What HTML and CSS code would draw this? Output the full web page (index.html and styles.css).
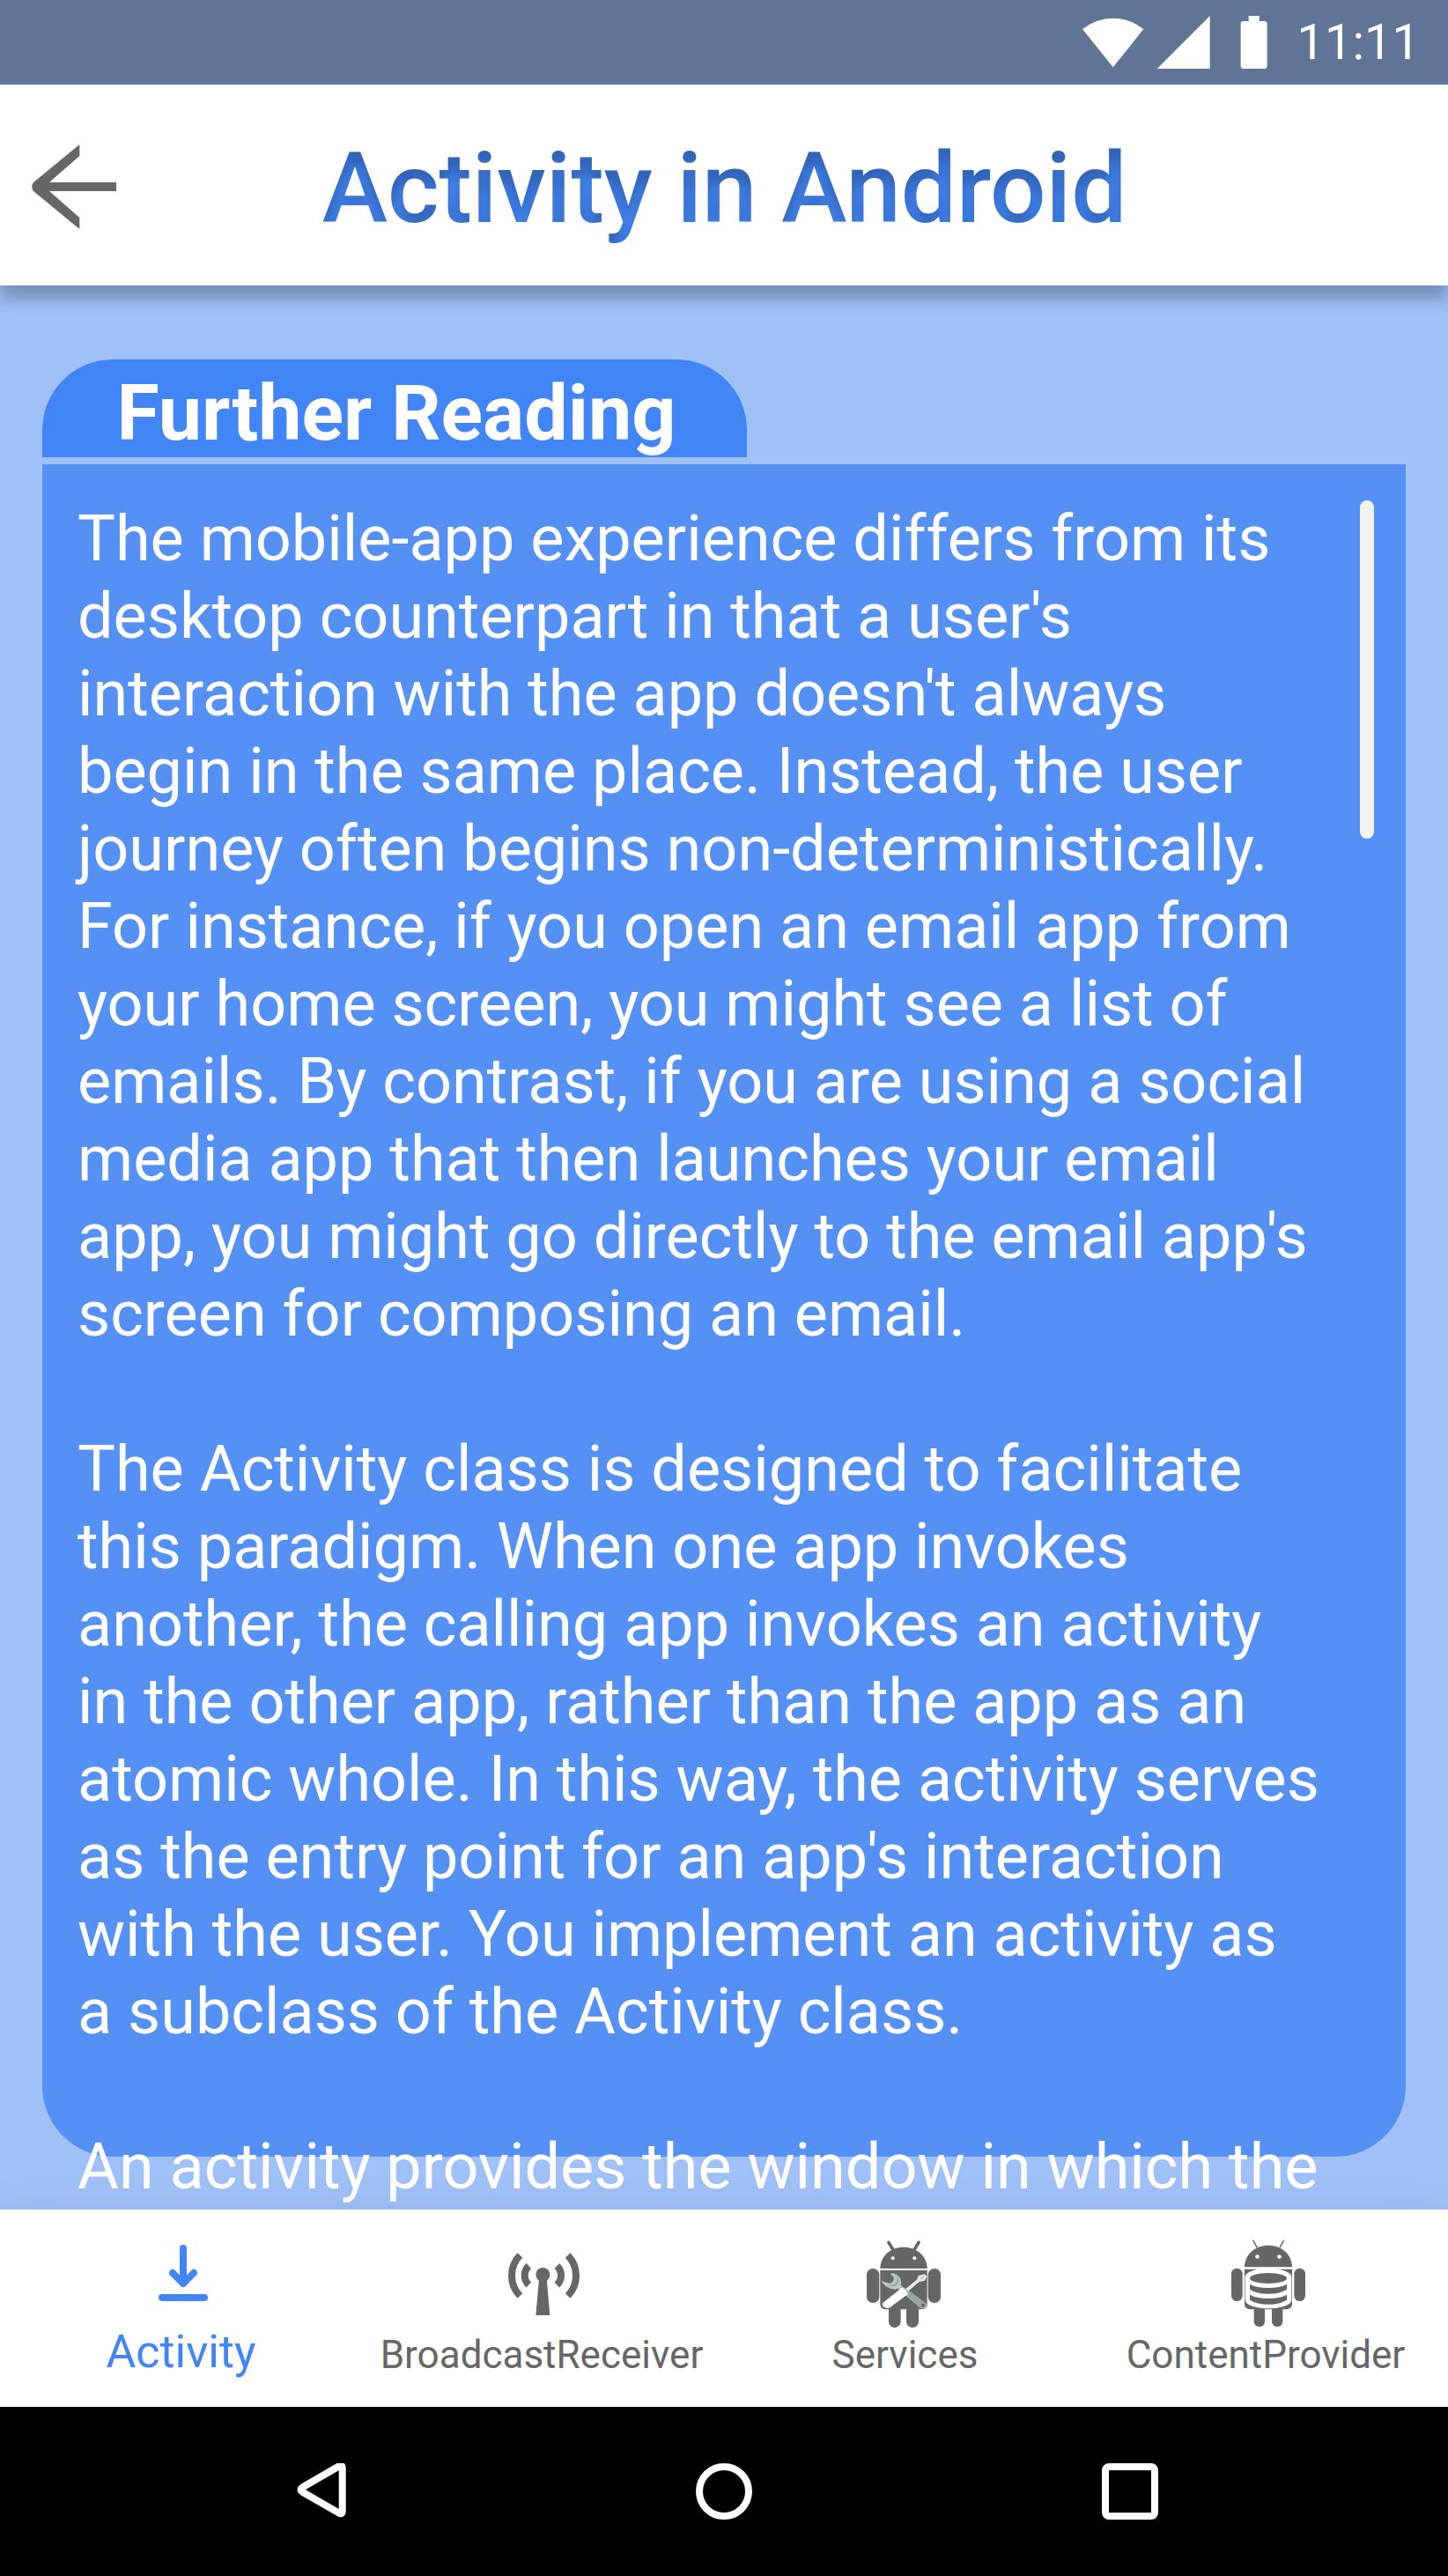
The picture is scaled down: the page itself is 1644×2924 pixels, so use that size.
FILE: index.html
```html
<!DOCTYPE html>
<html lang="en">
<head>
<meta charset="utf-8">
<title>Activity in Android</title>
<link rel="stylesheet" href="styles.css">
</head>
<body>
<svg class="defs" width="0" height="0" aria-hidden="true">
  <filter id="inner-shadow" x="-5%" y="-20%" width="110%" height="140%" color-interpolation-filters="sRGB">
    <feOffset in="SourceAlpha" dy="16" result="moved"/>
    <feGaussianBlur in="moved" stdDeviation="8" result="soft"/>
    <feComposite in="SourceAlpha" in2="soft" operator="out" result="edge"/>
    <feColorMatrix in="edge" type="matrix" values="0 0 0 0 0  0 0 0 0 0  0 0 0 0 0  0 0 0 .25 0" result="shade"/>
    <feMerge><feMergeNode in="SourceGraphic"/><feMergeNode in="shade"/></feMerge>
  </filter>
</svg>

<div class="screen">
  <div class="status-bar">
    <svg class="status-icons" viewBox="88 54 630 180" width="210" height="60" fill="#fff">
      <path d="M88 99Q136 62 192 62T296 99L192 229Z"/>
      <path d="M342 234L522 54V234Z"/>
      <path d="M654 54h36v18h17a10 10 0 0 1 10 10v142a10 10 0 0 1-10 10h-70a10 10 0 0 1-10-10V82a10 10 0 0 1 10-10h17Z"/>
    </svg>
    <span class="clock">11:11</span>
  </div>

  <header class="app-bar">
    <svg class="back" viewBox="36 164 96 96" width="96" height="96" fill="#666">
      <path d="M90.300 164L38 207Q34.500 212 38 217L90.300 260V247L56 217H132V207H56L90.300 177Z"/>
    </svg>
    <h1 class="title">Activity in Android</h1>
  </header>

  <main class="content">
    <h2 class="tab">Further Reading</h2>
    <section class="panel">
      <div class="text">
        <p>The mobile-app experience differs from its<br>desktop counterpart in that a user's<br>interaction with the app doesn't always<br>begin in the same place. Instead, the user<br>journey often begins non-deterministically.<br>For instance, if you open an email app from<br>your home screen, you might see a list of<br>emails. By contrast, if you are using a social<br>media app that then launches your email<br>app, you might go directly to the email app's<br>screen for composing an email.</p>
        <p>The Activity class is designed to facilitate<br>this paradigm. When one app invokes<br>another, the calling app invokes an activity<br>in the other app, rather than the app as an<br>atomic whole. In this way, the activity serves<br>as the entry point for an app's interaction<br>with the user. You implement an activity as<br>a subclass of the Activity class.</p>
        <p>An activity provides the window in which the</p>
      </div>
      <div class="scrollbar"></div>
    </section>
  </main>

  <nav class="tabs">
    <a class="item active">
      <svg class="icon download" viewBox="180 2548 56 64" width="56" height="64" fill="none" stroke="#4285f4" stroke-width="8" stroke-linecap="round" stroke-linejoin="round">
        <path d="M208 2552V2592M196 2580L208 2592L220 2580M184 2608H232"/>
      </svg>
      <span>Activity</span>
    </a>
    <a class="item">
      <svg class="icon antenna" viewBox="470 141 243 213" width="81" height="71" fill="none" stroke="#666" stroke-width="24">
        <path d="M636 186A44.700 44.700 0 0 1 636 251M673 150A99 99 0 0 1 673 288M540 186A44.700 44.700 0 0 0 540 251M510 150A99 99 0 0 0 510 288"/>
        <circle cx="588" cy="216" r="24" fill="#666" stroke="none"/>
        <path d="M575 230H601L612 354H564Z" fill="#666" stroke="none"/>
      </svg>
      <span class="long">BroadcastReceiver</span>
    </a>
    <a class="item">
      <svg class="icon android services" viewBox="192 69 252 297" width="84" height="99" fill="#666">
        <path d="M267 76L283 103M369 76L353 103" stroke="#666" stroke-width="11" stroke-linecap="round"/>
        <path d="M238 165C238 122 274 92 318 92S398 122 398 165Z"/>
        <circle cx="281" cy="130" r="6" fill="#fff"/><circle cx="355" cy="130" r="6" fill="#fff"/>
        <path d="M238 171H398V286A18 18 0 0 1 380 304H256A18 18 0 0 1 238 286Z"/>
        <rect x="192" y="165" width="43" height="117" rx="21"/><rect x="401" y="165" width="43" height="117" rx="21"/>
        <rect x="267" y="290" width="41" height="76" rx="20"/><rect x="327" y="290" width="42" height="76" rx="20"/>
        <path d="M272 182Q284 177 300 190Q313 203 308 222L396 285Q402 297 388 300Q379 302 371 296L299 233Q279 240 258 226Q247 218 241 206L260 213Q270 218 278 212Q288 202 283 194Z" fill="#bdc7c8"/>
        <path d="M285 184Q304 200 292 213Q282 224 262 222Q280 231 293 222Q302 214 302 204Q300 193 285 184Z" fill="#95a5a6"/>
        <path d="M309 237L323 230L396 285Q402 297 388 300Q379 302 371 296Z" fill="#95a5a6"/>
        <circle cx="384" cy="290" r="6" fill="#5d696a"/>
        <path d="M325 234L363 203L368 190L389 184L397 192L390 206L371 210L332 243Z" fill="#e9eef0"/>
        <path d="M371 195L388 189L391 193L377 204Z" fill="#c3cccf"/>
        <path d="M247 282L311 231L321 235L334 251L271 298Q261 303 249 295Q243 288 247 282Z" fill="#fff"/>
      </svg>
      <span>Services</span>
    </a>
    <a class="item">
      <svg class="icon android provider" viewBox="414 69 252 297" width="84" height="99" fill="#666">
        <path d="M488 69L502 94M593 69L579 94" stroke="#666" stroke-width="4.500"/>
        <path d="M459 160C459 116 496 86 540 86S621 116 621 160Z"/>
        <circle cx="502.500" cy="124.500" r="7" fill="#fff"/><circle cx="577.500" cy="124.500" r="7" fill="#fff"/>
        <path d="M459 167H621V286A18 18 0 0 1 603 304H477A18 18 0 0 1 459 286Z"/>
        <rect x="414" y="164" width="38" height="112" rx="19"/><rect x="628" y="164" width="38" height="112" rx="19"/>
        <rect x="491" y="285" width="37" height="78" rx="17"/><rect x="552" y="285" width="37" height="78" rx="17"/>
        <path d="M461 194C461 176 500 164 540 164S619 176 619 194V272C619 289 580 301 540 301S461 289 461 272Z" fill="#fff"/>
        <ellipse cx="540" cy="198" rx="63" ry="18"/>
        <path d="M477 218Q500 231 540 231T603 218V236Q580 251 540 251T477 236ZM477 254Q500 267 540 267T603 254V272Q580 287 540 287T477 272Z"/>
      </svg>
      <span class="long">ContentProvider</span>
    </a>
  </nav>

  <div class="system-nav">
    <svg viewBox="333 2796 64 64" width="64" height="64" fill="none" stroke="#fff" stroke-width="8" stroke-linejoin="round">
      <path d="M388.700 2801.500Q388.700 2797 385 2799.200L344 2823Q339 2826 344 2829L385 2852.600Q388.700 2854.800 388.700 2850Z"/>
    </svg>
    <svg class="home" viewBox="0 0 64 64" width="64" height="64" fill="none" stroke="#fff" stroke-width="8"><circle cx="32" cy="32" r="28"/></svg>
    <svg viewBox="0 0 64 64" width="64" height="64" fill="none" stroke="#fff" stroke-width="8"><rect x="4" y="4" width="56" height="56" rx="4"/></svg>
  </div>
</div>
</body>
</html>
```
FILE: styles.css
```css
* { box-sizing: border-box; }

body {
  margin: 0;
  font-family: Roboto, "Liberation Sans", sans-serif;
}

.defs { position: absolute; }

svg { display: block; flex: none; }

.screen {
  width: 1644px;
  height: 2924px;
  display: flex;
  flex-direction: column;
  overflow: hidden;
  background: #a0c1f8;
}

.status-bar {
  height: 96px;
  flex: none;
  display: flex;
  justify-content: flex-end;
  padding: 15px 32px 0 0;
  background: #607495;
  color: #fff;
}

.status-icons { margin: 3px 34px 0 0; }

.clock {
  font-size: 56px;
  line-height: 66px;
}

.app-bar {
  height: 228px;
  flex: none;
  display: grid;
  grid-template-columns: 132px 1fr 131px;
  background: #fff;
  box-shadow: 0 16px 16px rgba(0, 0, 0, .25);
  z-index: 1;
}

.back { margin: 68px 0 0 36px; }

.title {
  margin: 52px 0 0;
  text-align: center;
  font-size: 112px;
  font-weight: 500;
  line-height: 132px;
  white-space: nowrap;
  color: #4285f4;
  filter: url(#inner-shadow);
}

.content {
  height: 2184px;
  flex: none;
  padding: 84px 48px 0;
}

.tab {
  width: 800px;
  height: 111px;
  margin: 0 0 8px;
  padding: 9px 0 0 4px;
  border-radius: 80px 80px 0 0;
  background: #4285f6;
  color: #fff;
  font-size: 88px;
  font-weight: 700;
  line-height: 103px;
  text-align: center;
  white-space: nowrap;
}

.panel {
  height: 1921px;
  display: flex;
  justify-content: space-between;
  align-items: flex-start;
  padding: 41px 36px 0 40px;
  border-radius: 0 0 80px 80px;
  background: #5590f5;
}

.text {
  font-size: 72px;
  line-height: 88px;
  color: #fff;
  white-space: nowrap;
}

.text p { margin: 0 0 88px; }

.scrollbar {
  width: 16px;
  height: 384px;
  border-radius: 8px;
  background: #f3f3f3;
}

.tabs {
  height: 224px;
  flex: none;
  display: grid;
  grid-template-columns: repeat(4, 411px);
  background: #fff;
  box-shadow: 0 12px 56px rgba(0, 0, 0, .12), 0 32px 40px rgba(0, 0, 0, .14);
  z-index: 1;
}

.item {
  display: flex;
  flex-direction: column;
  justify-content: flex-end;
  align-items: center;
  padding-bottom: 32px;
  color: #666;
  font-size: 44px;
  line-height: 54px;
}

.item.active {
  padding-bottom: 35px;
  color: #4285f4;
  font-size: 52px;
}

.long { padding-right: 3px; }

.download { margin: 0 0 31px 5px; }
.antenna { margin: 0 0 18px 1px; }
.android { margin-bottom: 4px; }
.services { margin-right: 3px; }
.provider { margin-left: 3px; }

.system-nav {
  height: 192px;
  flex: none;
  display: flex;
  justify-content: space-between;
  padding: 64px 329px 0 333px;
  background: #000;
  z-index: 2;
}

.home { margin-right: 4px; }
```
